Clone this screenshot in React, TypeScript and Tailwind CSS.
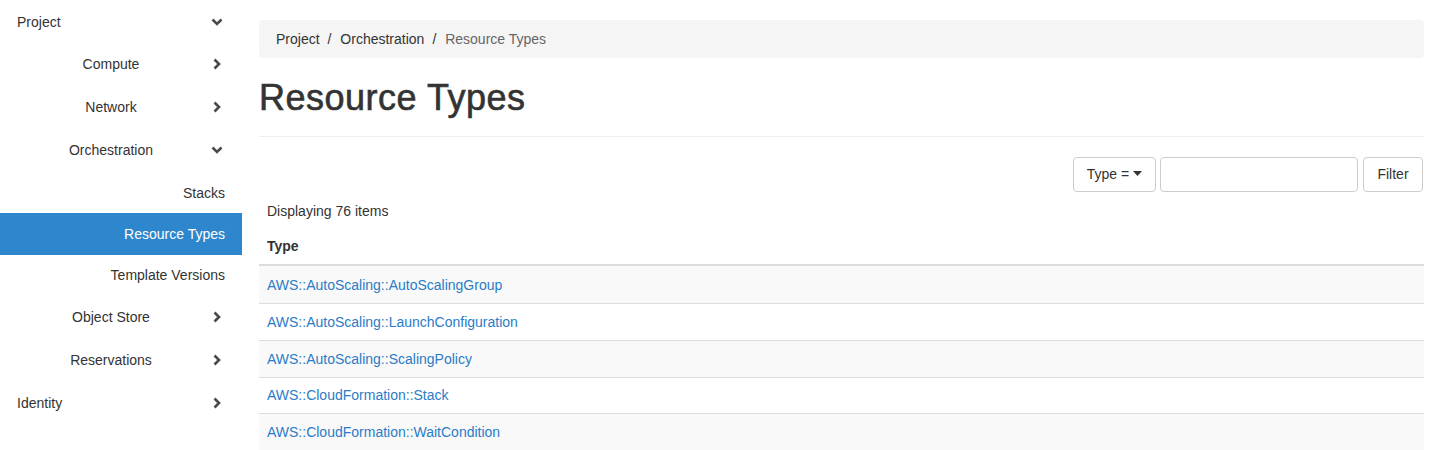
import React from "react";

const ChevronRight = () => (
  <svg width="12" height="12" viewBox="0 0 12 12" className="shrink-0">
    <polyline points="3.5,1.5 8,6 3.5,10.5" fill="none" stroke="#4a4a4a" strokeWidth="2.6" strokeLinecap="butt" strokeLinejoin="miter" />
  </svg>
);

const ChevronDown = () => (
  <svg width="12" height="12" viewBox="0 0 12 12" className="shrink-0">
    <polyline points="1.5,3.5 6,8 10.5,3.5" fill="none" stroke="#4a4a4a" strokeWidth="2.6" strokeLinecap="butt" strokeLinejoin="miter" />
  </svg>
);

type NavItem = { label: string; level: 1 | 2 | 3; chevron?: "down" | "right"; active?: boolean; h: string };

const nav: NavItem[] = [
  { label: "Project", level: 1, chevron: "down", h: "h-[42px] pt-[2px]" },
  { label: "Compute", level: 2, chevron: "right", h: "h-[43px]" },
  { label: "Network", level: 2, chevron: "right", h: "h-[43px]" },
  { label: "Orchestration", level: 2, chevron: "down", h: "h-[43px]" },
  { label: "Stacks", level: 3, h: "h-[42px] pt-[2px]" },
  { label: "Resource Types", level: 3, active: true, h: "h-[42px]" },
  { label: "Template Versions", level: 3, h: "h-[39px]" },
  { label: "Object Store", level: 2, chevron: "right", h: "h-[44px] pt-[2px]" },
  { label: "Reservations", level: 2, chevron: "right", h: "h-[43px]" },
  { label: "Identity", level: 1, chevron: "right", h: "h-[43px]" },
];

const rows = [
  "AWS::AutoScaling::AutoScalingGroup",
  "AWS::AutoScaling::LaunchConfiguration",
  "AWS::AutoScaling::ScalingPolicy",
  "AWS::CloudFormation::Stack",
  "AWS::CloudFormation::WaitCondition",
];

export default function App() {
  return (
    <div
      className="flex w-[1440px] h-[450px] overflow-hidden bg-white text-[14px] leading-[20px] text-[#333]"
      style={{ fontFamily: '"Liberation Sans", Arial, sans-serif' }}
    >
      {/* Sidebar */}
      <div className="w-[242px] shrink-0 flex flex-col">
        {nav.map((n) => {
          if (n.level === 1) {
            return (
              <div key={n.label} className={`${n.h} flex items-center pl-[17px] pr-[19px] text-[#333]`}>
                <span className="flex-1">{n.label}</span>
                {n.chevron === "down" ? <ChevronDown /> : <ChevronRight />}
              </div>
            );
          }
          if (n.level === 2) {
            return (
              <div key={n.label} className={`${n.h} flex items-center pl-[11px] pr-[19px] text-[#333]`}>
                <span className="flex-1 text-center">{n.label}</span>
                {n.chevron === "down" ? <ChevronDown /> : <ChevronRight />}
              </div>
            );
          }
          return (
            <div
              key={n.label}
              className={`${n.h} flex items-center justify-end pr-[17px] ${
                n.active ? "bg-[#2e86cc] text-white" : "text-[#333]"
              }`}
            >
              <span>{n.label}</span>
            </div>
          );
        })}
      </div>

      {/* Main */}
      <div className="flex-1 pl-[17px] pr-[16px] pt-[20px] flex flex-col">
        <div className="h-[38px] rounded-[4px] bg-[#f5f5f5] flex items-center px-[17px]">
          <span>Project</span>
          <span className="px-[5px] ml-[3px]">/&nbsp;</span>
          <span>Orchestration</span>
          <span className="px-[5px] ml-[3px]">/&nbsp;</span>
          <span className="text-[#666]">Resource Types</span>
        </div>

        <h1 className="mt-[20px] h-[40px] flex items-center text-[36px] leading-[40px] font-normal tracking-[0.5px] [-webkit-text-stroke:0.6px_#333] text-[#333]">
          Resource Types
        </h1>

        <div className="mt-[18px] border-t border-[#eee]" />

        <div className="mt-[20px] flex justify-end gap-[4px] pr-[1px]">
          <button className="h-[35px] w-[83px] rounded-[4px] border border-[#ccc] bg-white flex items-center justify-center gap-[4px] text-[#333]">
            <span>Type =</span>
            <svg width="9" height="6" viewBox="0 0 9 6">
              <polygon points="0,0 9,0 4.5,5" fill="#333" />
            </svg>
          </button>
          <div className="h-[35px] w-[198px] rounded-[4px] border border-[#ccc] bg-white" />
          <button className="h-[35px] w-[60px] ml-[1px] rounded-[4px] border border-[#ccc] bg-white text-[#333]">
            Filter
          </button>
        </div>

        <div className="mt-[9px] h-[20px] pl-[8px] flex items-center">Displaying 76 items</div>

        <div className="mt-[7px] h-[37px] pl-[8px] flex items-center font-bold border-b-2 border-[#ddd] box-content">
          Type
        </div>

        {rows.map((r, i) => (
          <div
            key={r}
            className={`h-[37px] pl-[8px] flex items-center ${i > 0 ? "border-t border-[#ddd]" : ""} ${
              i % 2 === 0 ? "bg-[#f9f9f9]" : "bg-white"
            }`}
          >
            <span className="text-[#2a7cc7]">{r}</span>
          </div>
        ))}
      </div>
    </div>
  );
}
